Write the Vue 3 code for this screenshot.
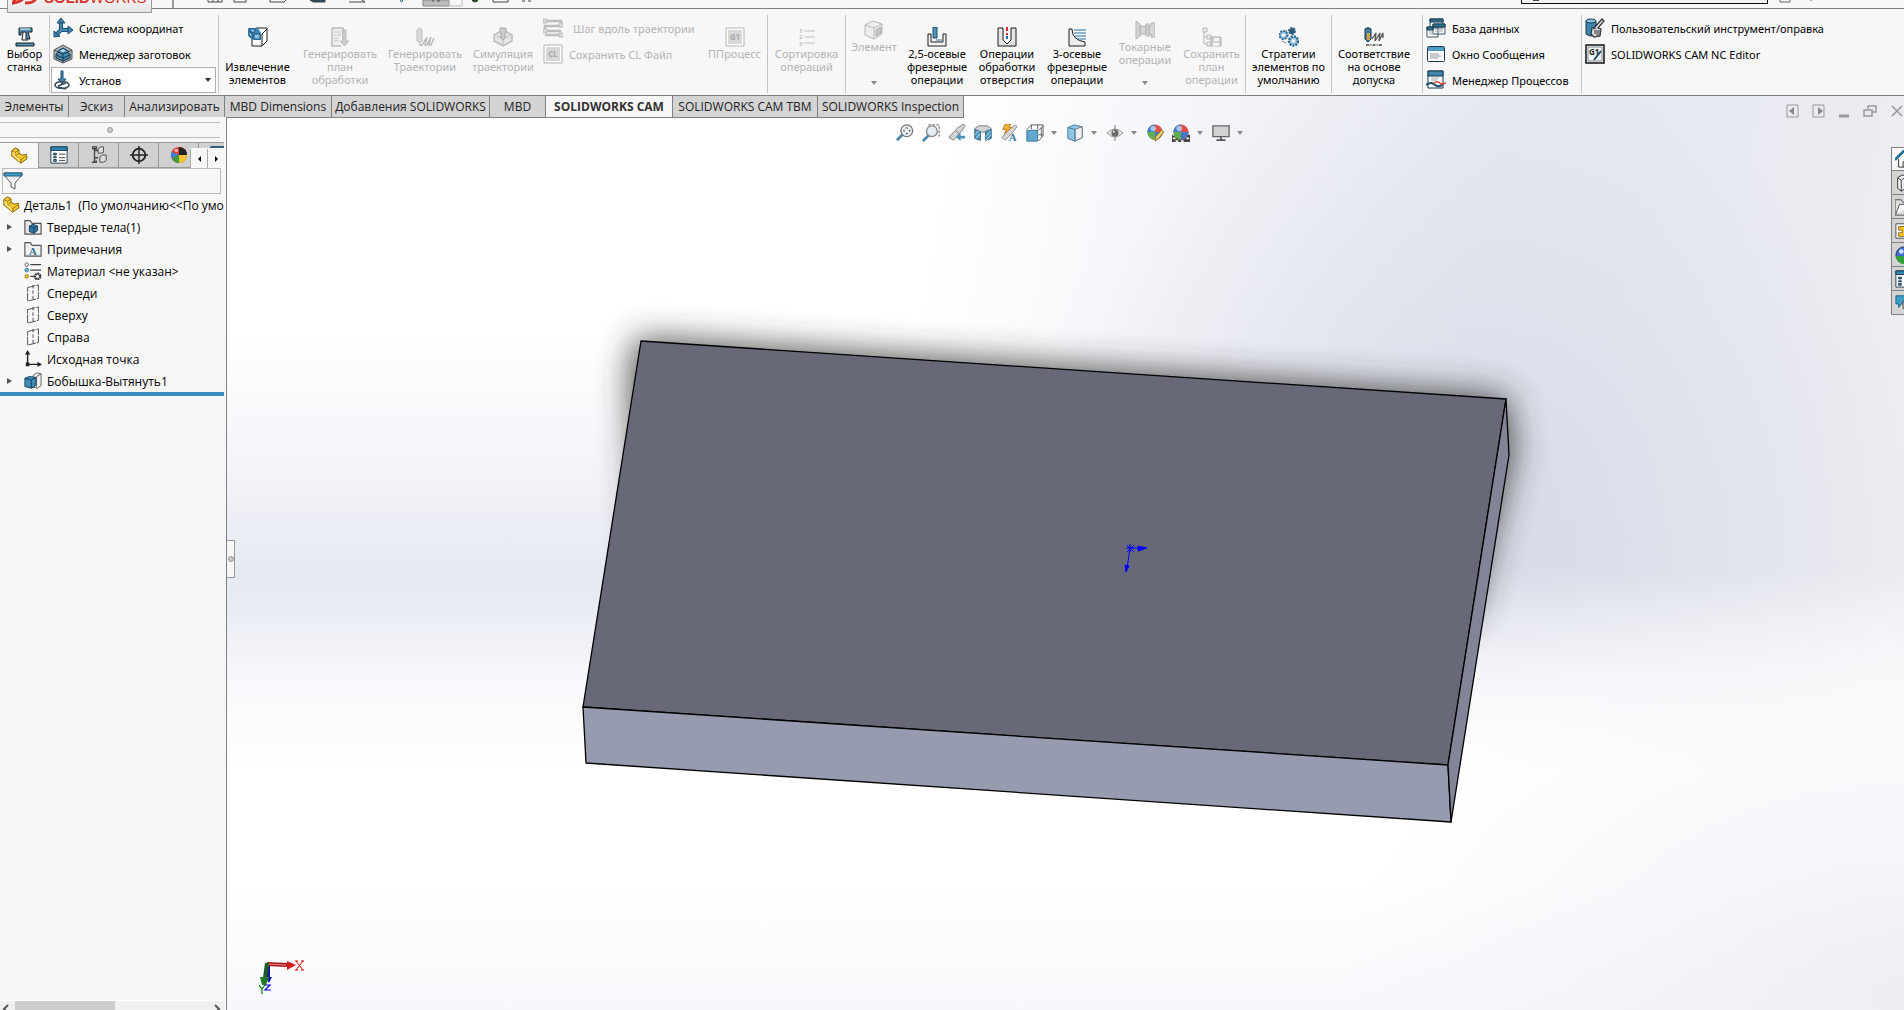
<script setup>
import { h, ref } from 'vue'

const K = '#1d1d1d'
const B = '#1b4f72'
const icons = {
  machine: `<path d="M4 1h13v4h-4l2 7h-4V5H6v3H4z" fill="#4f93bb" stroke="${K}"/><path d="M5 2h10" stroke="#dff"/><path d="M8 5l-1 8h6" fill="none" stroke="${K}"/><path d="M1 19v-3h18v3z" fill="#4f93bb" stroke="${K}"/>`,
  axes: `<path d="M8 3v9l-5 5M8 12h9" fill="none" stroke="${B}" stroke-width="4"/><path d="M8 4v8l-4 4M8 12h8" fill="none" stroke="#4b8bb3" stroke-width="2"/><path d="M4 5l4-5 4 5zM15 8l5 4-5 4zM1 13v6l6-1z" fill="#3f7fa8" stroke="${B}"/>`,
  stock: `<path d="M10 1l9 5v9l-9 4-9-4V6z" fill="#a9b4ba" stroke="#555"/><path d="M1 6l9 4 9-4M10 10v9" fill="none" stroke="#555"/><path d="M10 4l5 3v2l2 1v4l-7 3-7-3v-4l2-1V7z" fill="#4b8bb3" stroke="#17374b"/><path d="M5 8l5 2 5-2M3 11l7 3 7-3M10 10v7" fill="none" stroke="#17374b"/><path d="M10 5l3 2-3 1-3-1z" fill="#b9e0f2"/>`,
  setup: `<path d="M9 1h2v8h3l-4 5-4-5h3z" fill="#4b8bb3" stroke="${B}"/><ellipse cx="10" cy="15" rx="7" ry="3.500" fill="none" stroke="#3b4f5c" stroke-width="1.600"/><path d="M6 17l8 2M14 13l-8 3" stroke="#3b4f5c" stroke-width="1.500"/>`,
  extract: `<path d="M4 4l4-3h11v13l-5 5H4z" fill="#fff" stroke="${K}"/><path d="M14 19V7M14 7l5-5" fill="none" stroke="${K}"/><path d="M0 1h10l3 5v7H5L0 9z" fill="#3f88bb"/><path d="M1 2h7l-3 4zM6 7h6v5H6zM1 4l3 3v4l-3-3z" fill="#8ec4e6" stroke="#174e79"/>`,
  plan: `<path d="M2 1h11v12M2 1v18h9" fill="#eee" stroke="#bbb" stroke-width="1.500"/><path d="M4 5h7M4 8h7M4 11h5M4 14h5" stroke="#c4c4c4"/><path d="M13 3h3v11h3l-4.500 5L10 14h3z" fill="#ccc" stroke="#bbb"/>`,
  path: `<path d="M2 3q3-4 5 0v11l-2 2-3-2z" fill="#d9d9d9" stroke="#bcbcbc"/><path d="M4 18h3l5-8-2 8h2l4-8-2 8h2l3-7" fill="none" stroke="#b8b8b8" stroke-width="1.400"/>`,
  simul: `<path d="M10 3l9 5v6l-9 5-9-5V8z" fill="#e4e4e4" stroke="#bbb" stroke-width="1.500"/><path d="M4 9l6 3 6-3M10 12v6" fill="none" stroke="#bbb"/><path d="M7 1h6v4h-1v6l-2 2-2-2V5H7z" fill="#ccc" stroke="#aaa"/>`,
  steps: `<path d="M2 3h16v5H2v5h16M2 17h16" fill="none" stroke="#bdbdbd" stroke-width="2.500"/><path d="M0 1h4v4H0zM16 5h4v4h-4zM0 11h4v4H0zM16 15h4v4h-4z" fill="#ddd" stroke="#bdbdbd"/>`,
  cl: `<path d="M1 1h18v18H1z" fill="#fff" stroke="#b4b4b4"/><path d="M3 3h14v14H3z" fill="#d8d8d8"/><text x="10" y="13" font-size="8" font-weight="700" text-anchor="middle" fill="#a8a8a8">CL</text>`,
  g1: `<path d="M1 1h18v18H1z" fill="#fff" stroke="#b4b4b4"/><path d="M3 3h14v14H3z" fill="#d8d8d8"/><text x="10" y="13" font-size="8" font-weight="700" text-anchor="middle" fill="#a8a8a8">G1</text>`,
  sort: `<path d="M7 4h11M7 10h11M7 16h11" stroke="#c2c2c2"/><text x="2" y="6" font-size="6" font-weight="700" fill="#bbb">1</text><text x="2" y="12" font-size="6" font-weight="700" fill="#bbb">2</text><text x="2" y="19" font-size="6" font-weight="700" fill="#bbb">3</text>`,
  feature: `<path d="M1 5l8-4 9 3v10l-8 5-9-4z" fill="#eee" stroke="#b8b8b8"/><path d="M1 5l9 3 8-4M10 8v11" fill="none" stroke="#b8b8b8"/><path d="M12 10l5-3v6l-5 3z" fill="#c4c4c4" stroke="#aaa"/>`,
  mill25: `<path d="M1 7h3v8h12V7h3v12H1z" fill="#f4f4f4" stroke="${K}"/><path d="M6 0h4v11H6z" fill="#4f93bb" stroke="${B}"/><path d="M9 13h6" stroke="#2c6f9c"/>`,
  hole: `<path d="M1 1h5v12l4 4 4-4V1h5v18H1z" fill="#e4e4e4" stroke="${K}"/><path d="M10 0v4" stroke="#e8252a" stroke-width="2"/><path d="M10 6v2" stroke="#e8252a" stroke-width="2"/><path d="M10 9v3" stroke="#2170a5" stroke-width="2"/>`,
  mill3: `<path d="M2 2h3q0 11 13 13v4H2z" fill="#ececec" stroke="${K}"/><path d="M7 3h12M7 6h12M8 9h11M10 12h9" stroke="#2170a5"/>`,
  turn: `<path d="M1 1l4 3v12l-4 3zM5 6h6v8H5zM11 4h3v12h-3zM14 6h2V3h4v14h-4v-3h-2z" fill="#d6d6d6" stroke="#b4b4b4"/>`,
  save: `<path d="M1 1h4v4H1zM5 8h4v4H5zM5 15h4v4H5z" fill="#eee" stroke="#b6b6b6"/><path d="M2 5v12h3M2 10h3" fill="none" stroke="#b6b6b6"/><path d="M9 10h10v9H9z" fill="#d0d0d0" stroke="#b0b0b0"/><path d="M12 11h5v3h-5zM11 16h6v3h-6z" fill="#f4f4f4"/>`,
  gears: `<g fill="#9cc6e0" stroke="#2d6a91"><circle cx="4.500" cy="8" r="4" stroke-dasharray="2 1" stroke-width="2"/><circle cx="13" cy="4" r="3" fill="#33566c" stroke-dasharray="2 1" stroke-width="2"/><circle cx="14.500" cy="14" r="4.500" stroke-dasharray="2 1" stroke-width="2.500"/></g><circle cx="4.500" cy="8" r="1.500" fill="#fff"/><circle cx="14.500" cy="14" r="1.700" fill="#fff"/><path d="M3 14l4 2M8 3L6 5" stroke="#888"/>`,
  tol: `<path d="M1 2q3-3 6 0v10l-3 3-3-3z" fill="#3c7fa8" stroke="#17374b"/><path d="M3 6h3v7H3z" fill="#dba33c"/><path d="M8 12l4-6-1 8 5-8-1 8 4-8v5" fill="none" stroke="#555" stroke-width="1.300"/><path d="M2 18h16" stroke="#777"/><path d="M2 17h3v2H2zM15 17h3v2h-3zM9 17h2v2H9z" fill="#777"/>`,
  db: `<g fill="#fff" stroke="#3a5566"><path d="M4 1h13v9H4zM1 9h11v10H1zM7 6h12v10H7z"/></g><path d="M4 1h13v3H4zM1 9h6v3H1zM7 6h12v3H7z" fill="#2f7396" stroke="#17374b"/><path d="M9 11h8M9 13h8M3 14h3M3 16h7" stroke="#9aa7ae"/>`,
  msg: `<rect x="1.500" y="2.500" width="17" height="15" rx="1" fill="#fff" stroke="#17374b"/><path d="M2 3h16v4H2z" fill="#4f9cc4"/><path d="M4 10h9M4 12h11M4 14h8" stroke="#8b979e"/>`,
  proc: `<path d="M2 1h15v17H2z" fill="#fff" stroke="#17374b"/><path d="M2 1h15v5H2z" fill="#3f86ad" stroke="#17374b"/><path d="M5 8h8M5 10h6" stroke="#9aa7ae"/><path d="M0 15q5-4 9 0 4 3 8-1" fill="none" stroke="#1c4a68" stroke-width="2"/><path d="M8 13q4-3 7 1l5-1" fill="none" stroke="#e2483c" stroke-width="1.500"/>`,
  tool: `<path d="M1 3v13q5 4 10 0V3z" fill="#3f86ad" stroke="#17374b"/><ellipse cx="6" cy="3" rx="5" ry="2" fill="#8ec4e6" stroke="#17374b"/><path d="M17 1l2 2-6 7 3 1-1 7-6 1-3-3 1-6 3-1z" fill="#d8dde0" stroke="#333" stroke-width="1.200"/><path d="M9 13h6M9 15h6M11 17h4M8 11l3-1" stroke="#333"/>`,
  nc: `<path d="M1 1h18v18H1z" fill="#fff" stroke="#111" stroke-width="1.500"/><path d="M3 3h14v14H3z" fill="#f4f8fa" stroke="#7b8890"/><text x="4" y="11" font-size="8" font-weight="700" fill="#222">G1</text><path d="M9 16l7-9" stroke="#1c4a68" stroke-width="2"/>`,
  part: `<path d="M2 4l4-3 4 2v4l4 2 4-1 1 5-7 5L2 10z" fill="#f4c62b" stroke="#7a5a0a"/><path d="M2 4l4 2v4l6 4v4M6 6l4-3M6 10l4-3M12 14l7-5" fill="none" stroke="#9a7410"/><path d="M3 5l3 2v3l5 3v4L3 9.500z" fill="#ffe07a"/>`,
  props: `<path d="M1 1h18v18H1z" fill="#fff" stroke="#17374b"/><path d="M1 1h18v4H1z" fill="#2f86b5" stroke="#17374b"/><path d="M4 8h3v2H4zM4 12h3v1H4zM4 15h3v2H4z" fill="#4f9cc4" stroke="#17374b"/><path d="M10 9h7M10 13h7M10 16h7" stroke="#333"/>`,
  config: `<path d="M3 1h4v2H3zM5 3v15M2 18h5v-2M5 5h4M5 13h4" fill="none" stroke="#444" stroke-width="1.500"/><path d="M9 3l3-2h3v6l-3 1H9zM11 12l3-2h4v6l-3 2h-4z" fill="#ddd" stroke="#444"/>`,
  target: `<circle cx="10" cy="10" r="7" fill="none" stroke="#222" stroke-width="2"/><path d="M10 0v20M0 10h20" stroke="#222" stroke-width="1.600"/>`,
  ball: `<circle cx="10" cy="10" r="9" fill="#e03b32"/><path d="M10 10L2 6a9 9 0 0 0 0 8z" fill="#3c7fd0"/><path d="M10 10l-8 4a9 9 0 0 0 8 5z" fill="#3c9c3c"/><path d="M10 10v9a9 9 0 0 0 9-9z" fill="#f0c330"/><path d="M10 10V1a9 9 0 0 1 9 9z" fill="#222"/><circle cx="7" cy="5" r="2" fill="#fff" opacity=".6"/>`,
  ball2: `<circle cx="10" cy="9" r="8.500" fill="#e0524a"/><path d="M10 9V.5A8.500 8.500 0 0 0 1.500 9z" fill="#3c7fd0"/><path d="M1.500 9a8.500 8.500 0 0 0 8.500 8.500V9z" fill="#5fb04f"/><path d="M10 9v8.500A8.500 8.500 0 0 0 18.500 9z" fill="#4a78c8"/><circle cx="8" cy="5" r="3" fill="#fff" opacity=".55"/>`,
  funnel: `<path d="M1 2h18v2l-7 8v6l-4-2v-4L1 4z" fill="#f4f4f4" stroke="#555"/><path d="M1 2h18v3H1z" fill="#3f9cc4" stroke="#1c5f82"/>`,
  solids: `<path d="M1 18V3h6l2 3h10v12z" fill="#e8e8e8" stroke="#555" stroke-width="1.300"/><path d="M6 9l4-2 5 2v5l-4 3-5-2z" fill="#2f7ba8" stroke="#103a54"/><path d="M6 9l5 2 4-2M11 11v6" fill="none" stroke="#103a54"/>`,
  notes: `<path d="M1 18V3h6l2 3h10v12z" fill="#f0f0f0" stroke="#555" stroke-width="1.300"/><text x="10" y="17" font-size="12" font-weight="700" text-anchor="middle" fill="#2f6f96" font-family="Liberation Serif,serif">A</text>`,
  material: `<path d="M7 3h12M7 9h12M7 16h6" stroke="#444" stroke-width="1.400"/><circle cx="3" cy="3" r="2" fill="#eee" stroke="#666"/><circle cx="3" cy="9" r="2" fill="#7cc4ea" stroke="#2d6a91"/><circle cx="3" cy="16" r="2" fill="#f4c62b" stroke="#9a7410"/><circle cx="15" cy="16" r="3" fill="#eee" stroke="#333" stroke-width="2.500" stroke-dasharray="2 .7"/>`,
  plane: `<path d="M4 4l12-3v15L4 19z" fill="#fafafa" stroke="#444" stroke-dasharray="9 1"/><path d="M10 1v18" stroke="#444" stroke-dasharray="4 2"/>`,
  origin: `<path d="M4 3v13h12" fill="none" stroke="#222" stroke-width="1.600"/><path d="M1 5l3-5 3 5zM15 13l5 3-5 3zM2 14h4v4H2z" fill="#222"/>`,
  boss: `<path d="M10 4l4-3 5 1v13l-4 3-5-1z" fill="#f2f2f2" stroke="#555"/><path d="M14 5l5-3M14 5v12" stroke="#555"/><path d="M1 7l5-2 7 1v9l-5 3-7-2z" fill="#3f8cb8" stroke="#103a54"/><path d="M1 7l7 2 5-3M8 9v9" fill="none" stroke="#103a54"/>`,
  zoomFit: `<circle cx="12" cy="7.500" r="6.500" fill="#eef4f7" stroke="#777" stroke-width="1.500"/><path d="M7 12l-6 6" stroke="#4a87ab" stroke-width="3"/><path d="M12 3l1.500 2h-3zM12 12l1.500-2h-3zM7.500 7.500l2-1.500v3zM16.500 7.500l-2-1.500v3z" fill="#444"/>`,
  zoomArea: `<path d="M7 1h12v13" fill="none" stroke="#555" stroke-dasharray="3 1.500"/><circle cx="11" cy="8" r="6" fill="#e3eef4" stroke="#888" stroke-width="1.500"/><path d="M7 13l-6 6" stroke="#4a87ab" stroke-width="3"/>`,
  prev: `<path d="M1 15l9-10 7-5 2 2-4 6-9 10z" fill="#d4d4d4" stroke="#777"/><path d="M9 8l4 3" stroke="#777"/><path d="M19 13h-5v-3l-5 4.500 5 4.500v-3h5z" fill="#4a93bb"/>`,
  section: `<path d="M1 5l4-3h10l4 3v11l-6 2V9H7v9l-6-2z" fill="#d4d4d4" stroke="#777"/><path d="M1 6l6 2v10l-6-2zM13 8l6-2v10l-6 2z" fill="#4f96bd" stroke="#2d6a8a"/><path d="M1 12l5-5M2 16l5-5M13 14l6-6M13 18l6-6" stroke="#d3ecf7"/>`,
  annot: `<path d="M2 15l9-10 6-4 2 2-4 5-9 10z" fill="#d4d4d4" stroke="#888"/><path d="M6 0h6l-2 4h3l-8 7 2-5H3z" fill="#f2b33d" stroke="#b87418"/><text x="14" y="19" font-size="12" font-weight="700" text-anchor="middle" fill="#3a7ca3" font-family="Liberation Serif,serif">A</text>`,
  orient: `<path d="M1 6l5-5h13v12l-5 6" fill="#fff" stroke="#555"/><path d="M1 7h12v12H1z" fill="#62a8cc" stroke="#2d6a91"/><path d="M6 1v5M13 1v5M14 7l5-5M14 12h5M17 4v10" fill="none" stroke="#555"/>`,
  display: `<path d="M2 4l7-3 9 2v12l-8 4-8-3z" fill="#8ec8e6" stroke="#3f7494"/><path d="M10 6l8-3v12l-8 4z" fill="#eef2f4" stroke="#777"/><path d="M2 4l8 2v13" fill="none" stroke="#3f7494"/>`,
  eye: `<path d="M1 10q9-9 18 0-9 9-18 0z" fill="#e4e4e4" stroke="#999"/><circle cx="10" cy="10" r="4" fill="#666"/><path d="M10 1v18" stroke="#777"/><circle cx="8.500" cy="8.500" r="1" fill="#fff"/>`,
  pencil: `<path d="M10 19l1-5 6-7 3 2-7 8z" fill="#f4d06a" stroke="#8a6a1c"/>`,
  checks: `<path d="M0 12h20v8H0z" fill="#444"/><path d="M1 15h3v2H1zM16 15h3v2h-3zM4 18h3v2H4zM10 18h3v2h-3zM1 12h2v1H1z" fill="#eee"/>`,
  monitor: `<path d="M1 2h18v12H1z" fill="#d2d2d2" stroke="#666" stroke-width="1.500"/><path d="M9 14h2v3h4v2H5v-2h4z" fill="#555"/>`,
  home: `<path d="M4 10v9h12v-9M9 19v-6h5" fill="#fff" stroke="#222"/><path d="M0 11L10 1l10 10" fill="none" stroke="#1f6f94" stroke-width="3"/>`,
  library: `<path d="M3 4l5-3 4 2v13l-5 3-4-3z" fill="#eee" stroke="#333"/><path d="M3 4l4 3v12M7 7l5-4" fill="none" stroke="#333"/><path d="M12 5h6v12h-6" fill="#ddd" stroke="#333"/>`,
  folder: `<path d="M0 19V2h7l2 3h11v14z" fill="#ddd" stroke="#444"/><path d="M1 18L5 7h15" fill="#fff" stroke="#444"/>`,
  palette: `<path d="M1 2h18v16H1z" fill="#fff" stroke="#444"/><path d="M4 5h13v4h-4v3h4v4H4v-4h4V9H4z" fill="#f4c62b" stroke="#8a6a1c"/>`,
  globe: `<circle cx="10" cy="10" r="9" fill="#3f6fd0" stroke="#234"/><path d="M1 11h18a9 9 0 0 1-18 0z" fill="#2fa03c"/><circle cx="7" cy="6" r="2.500" fill="#cfe0ff"/>`,
  forum: `<path d="M1 2h13v9H7l-3 4v-4H1z" fill="#3f9cc4" stroke="#1c5f82"/><path d="M9 8h11v8H9z" fill="#fff" stroke="#333"/>`,
}
icons.appearance = icons.ball2 + icons.pencil
icons.scene = icons.checks + icons.ball2

const Icon = (p) =>
  h('svg', { viewBox: '0 0 20 20', width: p.size || 20, height: p.size || 20, innerHTML: icons[p.name], 'aria-hidden': 'true' })
Icon.props = ['name', 'size']

const tabs = [
  ['Элементы', 69], ['Эскиз', 56], ['Анализировать', 100], ['MBD Dimensions', 107],
  ['Добавления SOLIDWORKS', 158], ['MBD', 56], ['SOLIDWORKS CAM', 127],
  ['SOLIDWORKS CAM TBM', 145], ['SOLIDWORKS Inspection', 146],
].map(([label, width]) => ({ label, width }))
const activeTab = ref('SOLIDWORKS CAM')

const generate = [
  { icon: 'extract', lines: ['', 'Извлечение', 'элементов'], w: 77 },
  { icon: 'plan', lines: ['Генерировать', 'план', 'обработки'], w: 88, off: true },
  { icon: 'path', lines: ['Генерировать', 'Траектории'], w: 82, off: true },
  { icon: 'simul', lines: ['Симуляция', 'траектории'], w: 74, off: true },
]
const operations = [
  { icon: 'feature', lines: ['Элемент'], w: 56, off: true, menu: true },
  { icon: 'mill25', lines: ['2,5-осевые', 'фрезерные', 'операции'], w: 70 },
  { icon: 'hole', lines: ['Операции', 'обработки', 'отверстия'], w: 70 },
  { icon: 'mill3', lines: ['3-осевые', 'фрезерные', 'операции'], w: 70 },
  { icon: 'turn', lines: ['Токарные', 'операции'], w: 66, off: true, menu: true },
  { icon: 'save', lines: ['Сохранить', 'план', 'операции'], w: 67, off: true },
]
const groups = [
  { tools: [{ icon: 'machine', lines: ['Выбор', 'станка'], w: 49 }] },
  { setup: true, list: [{ icon: 'axes', label: 'Система координат' }, { icon: 'stock', label: 'Менеджер заготовок' }], w: 168 },
  {
    tools: generate,
    list: [{ icon: 'steps', label: 'Шаг вдоль траектории', off: true, wide: true }, { icon: 'cl', label: 'Сохранить CL Файл', off: true }],
    w: 162,
    after: [{ icon: 'g1', lines: ['ППроцесс'], w: 65, off: true }],
  },
  { tools: [{ icon: 'sort', lines: ['Сортировка', 'операций'], w: 77, off: true }] },
  { tools: operations },
  { tools: [{ icon: 'gears', lines: ['Стратегии', 'элементов по', 'умолчанию'], w: 85 }] },
  { tools: [{ icon: 'tol', lines: ['Соответствие', 'на основе', 'допуска'], w: 84 }], roomy: true },
  {
    list: [{ icon: 'db', label: 'База данных' }, { icon: 'msg', label: 'Окно Сообщения' }, { icon: 'proc', label: 'Менеджер Процессов' }],
    w: 158,
  },
  { list: [{ icon: 'tool', label: 'Пользовательский инструмент/оправка' }, { icon: 'nc', label: 'SOLIDWORKS CAM NC Editor' }], w: 260 },
]
const panelTabs = ['part', 'props', 'config', 'target', 'ball', 'props']
const tree = [
  { icon: 'solids', label: 'Твердые тела(1)', open: true },
  { icon: 'notes', label: 'Примечания', open: true },
  { icon: 'material', label: 'Материал <не указан>' },
  { icon: 'plane', label: 'Спереди' },
  { icon: 'plane', label: 'Сверху' },
  { icon: 'plane', label: 'Справа' },
  { icon: 'origin', label: 'Исходная точка' },
  { icon: 'boss', label: 'Бобышка-Вытянуть1', open: true },
]
const viewTools = [
  ['zoomFit'], ['zoomArea'], ['prev'], ['section'], ['annot'], ['orient', true],
  ['display', true], ['eye', true], ['appearance'], ['scene', true], ['monitor', true],
]
const paneTools = ['home', 'library', 'folder', 'palette', 'globe', 'props', 'forum']
const setup = ref('Установ')
const filter = ref('')
</script>

<template>
  <div class="app">
    <header class="title">
      <div class="logo">
        <svg width="28" height="16" viewBox="0 0 28 16"><path d="M8 1L1 14Q12 12 12 7M26 2q-9 0-8 4 6 3 5 5-2 3-10 3" fill="none" stroke="#d8342b" stroke-width="3" /></svg>
        <span><b>SOLID</b>WORKS</span>
      </div>
      <svg class="quick" width="360" height="8" viewBox="180 0 360 8" fill="none" stroke="#444">
        <path d="M208 0v2h14V0M213 0v2M218 0v2M234 0v2h12V0M270 0v2h14l2-2M349 2h16l-3-2" />
        <path d="M310 0l3 2h12V0z" fill="#1b4f72" />
        <path d="M400 0l1.500 2 1.500-2" stroke="#1b4f72" />
        <path d="M423 0h26v6h-26z" fill="#bdbdbd" stroke="#888" /><path d="M449 0v6h13V0" stroke="#bbb" /><path d="M432 1h2M437 1h3" />
        <circle cx="475" cy="-1" r="3" fill="#1d4a12" />
        <path d="M493 0v2h15V0M522 1h3M528 1h3" />
      </svg>
      <span class="fill"></span>
      <div class="search"><svg width="8" height="4" viewBox="0 0 8 4"><path d="M1 0h6" stroke="#444" stroke-width="2" /></svg></div>
      <svg width="136" height="8" viewBox="0 0 136 8"><path d="M12 0v2h10V0M43 0v1" fill="none" stroke="#666" /></svg>
    </header>

    <section class="ribbon">
      <div v-for="(g, i) in groups" :key="i" class="group" :class="{ roomy: g.roomy }">
        <button v-for="t in g.tools" :key="t.icon" class="tool" :class="{ off: t.off, menu: t.menu }" :disabled="t.off" :style="{ width: t.w + 'px' }">
          <Icon :name="t.icon" />
          <span v-for="(l, n) in t.lines" :key="n" class="line">{{ l }}</span>
          <i v-if="t.menu" class="caret"></i>
        </button>
        <div v-if="g.list" class="list" :style="{ width: g.w + 'px' }">
          <button v-for="r in g.list" :key="r.label" class="row" :class="{ off: r.off, wide: r.wide }" :disabled="r.off">
            <Icon :name="r.icon" /><span>{{ r.label }}</span>
          </button>
          <label v-if="g.setup" class="setup">
            <Icon name="setup" />
            <select v-model="setup" aria-label="Установ"><option>Установ</option></select>
            <i class="caret"></i>
          </label>
        </div>
        <button v-for="t in g.after" :key="t.icon" class="tool off" disabled :style="{ width: t.w + 'px' }">
          <Icon :name="t.icon" />
          <span v-for="l in t.lines" :key="l" class="line">{{ l }}</span>
        </button>
      </div>
    </section>

    <main class="work">
      <svg class="scene" width="1904" height="914" viewBox="0 96 1904 914">
        <defs>
          <filter id="soft" x="-10%" y="-30%" width="120%" height="160%"><feGaussianBlur stdDeviation="17" /></filter>
        </defs>
        <path d="M636 338L1506 396L1514 450L1470 620L640 560L630 380z" fill="#33332f" opacity=".85" filter="url(#soft)" />
        <g stroke="#000" stroke-width="1.300" stroke-linejoin="round">
          <path d="M641 341L1506 399L1448 765L583 707z" fill="#676978" />
          <path d="M583 707L1448 765L1451 822L586 763z" fill="#979baf" />
          <path d="M1506 399L1509 455L1451 822L1448 765z" fill="#828497" />
        </g>
        <g stroke="#00f" fill="#00f">
          <path d="M1130 548h10M1130 548l-3 20M1127 545l7 7M1134 545l-7 7M1130 544v8M1126 548h8" />
          <path d="M1138 546l9 2-9 3zM1125 565l4 1-3 6z" />
        </g>
        <g>
          <path d="M268 965v14" stroke="#1515b0" stroke-width="4" /><path d="M265 977h7l-3 6z" fill="#1515b0" />
          <path d="M267 964l20 1" stroke="#a01616" stroke-width="4" /><path d="M268 964l18 1" stroke="#ff8a8a" /><path d="M287 961l9 4-9 5z" fill="#d41c1c" />
          <path d="M267 963l-2 15" stroke="#1b5e20" stroke-width="4" /><path d="M260 977h9l-3 8h-4z" fill="#1f7a26" />
          <path d="M296 961l7 9M303 961l-7 9M295 961h3M301 961h3M295 970h3M301 970h3" stroke="#e00000" />
          <path d="M259 985l3 4 3-4M262 989v5" fill="none" stroke="#007a00" stroke-width="1.200" />
          <path d="M265 985h5l-5 5h6" fill="none" stroke="#0000e0" stroke-width="1.200" />
        </g>
      </svg>

      <nav class="tabs">
        <button v-for="t in tabs" :key="t.label" :class="{ on: t.label === activeTab }" :style="{ width: t.width + 'px' }" @click="activeTab = t.label">{{ t.label }}</button>
      </nav>

      <div class="body">
        <aside class="panel">
          <div class="grip"><i class="dot"></i></div>
          <div class="ptabs">
            <button v-for="(p, i) in panelTabs" :key="i" :class="{ on: i === 0 }" :aria-label="p"><Icon :name="p" size="18" /></button>
            <div class="arrows"><button aria-label="prev"><i class="left"></i></button><button aria-label="next"><i class="right"></i></button></div>
          </div>
          <label class="filter"><Icon name="funnel" /><input v-model="filter" aria-label="filter" /></label>
          <ul class="tree">
            <li class="root"><Icon name="part" size="18" /><span>Деталь1&nbsp; (По умолчанию&lt;&lt;По умол</span></li>
            <li v-for="n in tree" :key="n.label"><i class="twist" :class="{ has: n.open }"></i><Icon :name="n.icon" size="18" /><span>{{ n.label }}</span></li>
          </ul>
          <div class="rollback"></div>
          <div class="scroll">
            <svg width="15" height="9" viewBox="0 0 15 9"><path d="M8 4L4 8l4 4" fill="none" stroke="#555" stroke-width="2" /></svg>
            <i class="thumb"></i>
            <svg width="15" height="9" viewBox="0 0 15 9"><path d="M6 4l4 4-4 4" fill="none" stroke="#555" stroke-width="2" /></svg>
          </div>
        </aside>
        <div class="handle"><i class="dot"></i></div>
        <div class="view">
          <div class="vtools">
            <button v-for="[name, menu] in viewTools" :key="name" :class="{ menu }" :aria-label="name"><Icon :name="name" size="18" /><i v-if="menu" class="caret"></i></button>
          </div>
        </div>
      </div>

      <div class="winctl">
        <svg width="118" height="14" viewBox="0 0 118 14" fill="none" stroke="#999">
          <path d="M1 1h11v12H1zM27 1h11v12H27z" /><path d="M8 3v8L3 7zM32 3v8l5-4z" fill="#888" stroke="none" />
          <path d="M53 12h10" stroke-width="3" /><path d="M78 6h8v6h-8zM82 5V2h8v6h-4" stroke-width="1.500" /><path d="M106 2l10 10M116 2l-10 10" stroke-width="1.500" />
        </svg>
      </div>
      <div class="pane"><button v-for="(p, i) in paneTools" :key="p" :class="{ on: i === 0 }" :aria-label="p"><Icon :name="p" size="18" /></button></div>
    </main>
  </div>
</template>

<style>
body { margin: 0; overflow: hidden; }
</style>

<style scoped>
.app { height: 100vh; display: flex; flex-direction: column; font: 12px/13px "Open Sans", "Noto Sans", sans-serif; color: #000; overflow: hidden; }
button { font: inherit; color: inherit; border: 0; padding: 0; background: none; margin: 0; }
svg { display: block; flex: none; }
.title { flex: none; height: 8px; display: flex; align-items: flex-start; background: #f7f7f7; border-bottom: 1px solid #808080; position: relative; z-index: 2; }
.logo { position: absolute; left: 7px; top: -12px; height: 23px; width: 142px; border: 1px solid #999; background: linear-gradient(#fff, #e4e4e4); display: flex; align-items: flex-start; gap: 4px; padding-left: 1px; color: #d8342b; font: 15px/18px "Liberation Sans", sans-serif; }
.logo svg { margin-left: 3px; }
.quick { margin-left: 172px; border-left: 2px solid #999; padding-left: 6px; }
.fill { flex: 1; }
.search { width: 247px; height: 4px; border: 1px solid #111; border-top: 0; background: #f0f3f5; padding-left: 10px; box-sizing: border-box; }
.ribbon { flex: none; height: 86px; background: #f7f7f7; border-bottom: 1px solid #808080; display: flex; font: 11px/13px "Noto Sans", "Open Sans", sans-serif; }
.group { display: flex; margin: 6px 0 2px; border-right: 1px solid #c4c4c4; height: 78px; }
.group.roomy { padding-right: 6px; }
.group:last-child { border: 0; }
.tool { display: flex; flex-direction: column; align-items: center; padding-top: 12px; white-space: nowrap; position: relative; }
.tool.menu { padding-top: 5px; }
.tool.off, .row.off { color: #b3b3b3; }
.line { height: 13px; }
.caret { width: 0; height: 0; border: 3px solid transparent; border-top: 4px solid #666; border-bottom: 0; }
.tool .caret { position: absolute; bottom: 8px; border-top-color: #888; }
.list { display: flex; flex-direction: column; }
.row { height: 26px; display: flex; align-items: center; gap: 6px; padding-left: 3px; white-space: nowrap; text-align: left; }
.row.wide { gap: 10px; }
.setup { height: 24px; width: 163px; margin-left: 1px; border: 1px solid #b0b0b0; background: #fff; display: flex; align-items: center; }
.setup select { appearance: none; border: 0; background: none; font: inherit; flex: 1; padding: 0 0 0 7px; outline: 0; color: #000; }
.setup .caret { margin-right: 4px; border-top-color: #333; }
.work { flex: 1; min-height: 0; position: relative; display: flex; flex-direction: column;
  background:
    radial-gradient(ellipse 30% 40% at 100% 98%, rgba(236,238,244,.9), rgba(236,238,244,0)),
    linear-gradient(to bottom, transparent 52%, rgba(255,255,255,.35) 57%, rgba(255,255,255,.75) 64%, #fff 74%, #fff 86%, #f7f8fb 100%),
    radial-gradient(ellipse 24% 50% at 77% 46%, rgba(206,211,225,.6), rgba(206,211,225,0)),
    linear-gradient(100deg, transparent 46%, rgba(225,229,238,.85) 73%, rgba(225,229,238,.85) 80%, rgba(236,237,241,.95) 96%),
    linear-gradient(to bottom, transparent 26%, rgba(240,242,247,.9) 42%, #e0e5ef 56%),
    #fff; }
.scene { position: absolute; left: 0; top: 0; }
.tabs { display: flex; position: relative; height: 21px; flex: none; }
.tabs button { box-sizing: border-box; background: #d4d4d4; border-right: 1px solid #808080; border-bottom: 1px solid #808080; color: #222; line-height: 20px; white-space: nowrap; height: 22px; }
.tabs button.on { background: #f7f7f7; font-weight: 700; color: #333; }
.body { flex: 1; min-height: 0; display: flex; position: relative; }
.panel { width: 226px; background: #f7f7f7; border-right: 1px solid #808080; display: flex; flex-direction: column; padding-top: 5px; }
.grip { width: 220px; height: 14px; border: 1px solid #bdbdbd; border-width: 1px 0; display: flex; align-items: center; justify-content: center; margin-bottom: 4px; }
.dot { width: 4px; height: 4px; border: 1px solid #999; border-radius: 50%; background: #ccc; }
.ptabs { width: 224px; height: 26px; display: flex; border-top: 1px solid #999; box-sizing: border-box; background: #d0d0d0; position: relative; overflow: hidden; }
.ptabs > button { flex: none; width: 40px; border-right: 1px solid #999; border-bottom: 1px solid #999; display: flex; align-items: center; justify-content: center; box-sizing: border-box; }
.ptabs > button.on { width: 39px; background: #f7f7f7; border-bottom: 0; }
.arrows { position: absolute; right: 0; bottom: 0; display: flex; border-top: 1px solid #f7f7f7; }
.arrows button { width: 17px; height: 19px; background: #f7f7f7; border-left: 1px solid #aaa; display: grid; place-items: center; }
.left, .right { width: 0; height: 0; border: 3px solid transparent; }
.left { border-right-color: #000; border-left: 0; }
.right { border-left-color: #000; border-right: 0; }
.filter { width: 217px; height: 24px; margin-left: 2px; border: 1px solid #bbb; display: flex; align-items: center; }
.filter input { flex: 1; min-width: 0; border: 0; background: none; outline: 0; font: inherit; }
.tree { list-style: none; margin: 0; padding: 0; width: 224px; overflow: hidden; }
.tree li { height: 22px; display: flex; align-items: center; white-space: nowrap; gap: 5px; }
.tree .root { padding-left: 2px; gap: 4px; }
.twist { width: 5px; height: 6px; margin: 0 7px; }
.twist.has { background: #555; clip-path: polygon(0 0, 100% 50%, 0 100%); }
.rollback { width: 224px; height: 4px; background: #3a8cc4; }
.scroll { margin-top: auto; width: 224px; height: 9px; background: #f0f0f0; border-top: 1px solid #fff; display: flex; justify-content: space-between; }
.thumb { width: 100px; background: #cdcdcd; margin-right: auto; }
.handle { width: 8px; height: 38px; align-self: center; margin-bottom: 10px; border: 1px solid #999; border-left: 0; background: #f7f7f7; display: grid; place-items: center; box-sizing: border-box; }
.view { flex: 1; display: flex; justify-content: center; align-items: flex-start; }
.vtools { display: flex; gap: 8px; padding-top: 7px; }
.vtools button { display: flex; align-items: center; }
.vtools .menu { gap: 7px; margin-right: 1px; }
.vtools .caret { border-top-color: #888; }
.winctl { position: absolute; right: 0; top: 8px; }
.pane { position: absolute; right: 0; top: 51px; width: 13px; border: 1px solid #808080; border-right: 0; box-sizing: border-box; overflow: hidden; }
.pane button { width: 100%; height: 24px; background: #d4d4d4; border-bottom: 1px solid #808080; display: flex; align-items: center; padding-left: 3px; box-sizing: border-box; overflow: hidden; }
.pane button.on { background: #f7f7f7; height: 23px; }
.pane button:last-child { border-bottom: 0; height: 23px; }
</style>
